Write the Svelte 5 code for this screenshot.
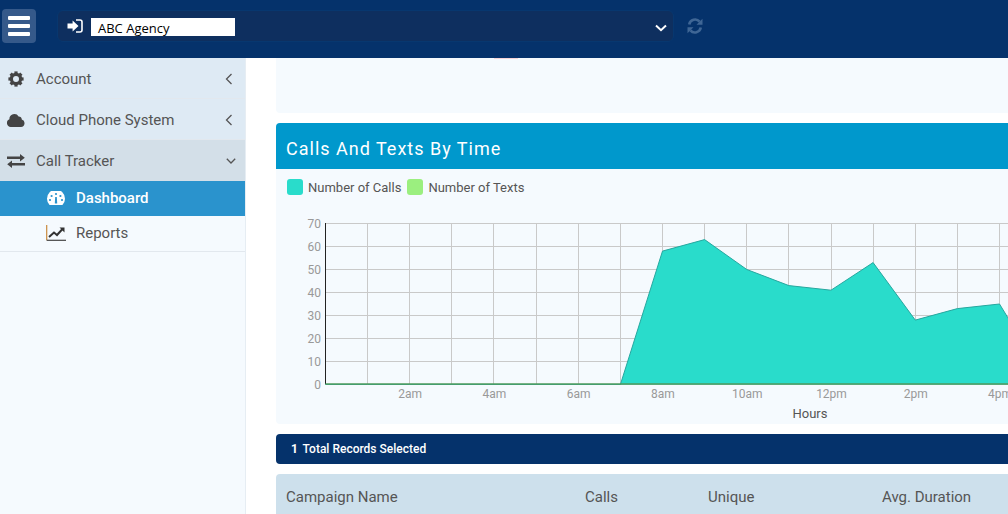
<script lang="ts">
  const calls = [0, 0, 0, 0, 0, 0, 0, 0, 58, 63, 50, 43, 41, 53, 28, 33, 35, 5, 0];
  const x0 = 325.45;
  const y0 = 384.5;
  const stepX = 42.13;
  const stepY = 23;

  const px = (h: number) => x0 + h * stepX;
  const py = (v: number) => y0 - v * stepY / 10;
  // gridlines sit on whole pixels so they stay crisp
  const gx = (h: number) => Math.floor(px(h)) + 0.5;

  const line = calls.map((v, i) => `${px(i).toFixed(1)},${py(v).toFixed(1)}`).join(' ');
  const area = `${x0},${y0} ${line} ${px(calls.length - 1)},${y0}`;
  const hours = Array.from({ length: 19 }, (_, i) => i);
  const values = [0, 10, 20, 30, 40, 50, 60, 70];
  const hourLabels = ['2am', '4am', '6am', '8am', '10am', '12pm', '2pm', '4pm'];
</script>

<div class="page">
  <header class="topbar">
    <button class="burger" aria-label="menu">
      <span></span><span></span><span></span>
    </button>
    <div class="agency">
      <svg class="signin" viewBox="0 0 16 14" width="16" height="14">
        <path d="M0.5 4.4 H5.6 V1.6 L11.5 7 L5.6 12.4 V9.6 H0.5 Z" fill="#fff" />
        <path d="M9 1 H13 Q15 1 15 3 V11 Q15 13 13 13 H9" fill="none" stroke="#fff" stroke-width="1.6" />
      </svg>
      <div class="agency-name">ABC Agency</div>
      <svg class="chevron" viewBox="0 0 12 8" width="12" height="8">
        <path d="M1 1.5 L6 6.2 L11 1.5" fill="none" stroke="#fff" stroke-width="2" />
      </svg>
    </div>
    <svg class="refresh" viewBox="0 0 16 16" width="16" height="16">
      <path d="M2.2 6.4 A6 6 0 0 1 12.6 3.6" fill="none" stroke="#3f6695" stroke-width="2.6" />
      <path d="M15.5 0.8 V6.8 H9.5 Z" fill="#3f6695" />
      <path d="M13.8 9.6 A6 6 0 0 1 3.4 12.4" fill="none" stroke="#3f6695" stroke-width="2.6" />
      <path d="M0.5 15.2 V9.2 H6.5 Z" fill="#3f6695" />
    </svg>
  </header>

  <div class="body">
    <nav class="sidebar">
      <a class="item">
        <svg class="icon" viewBox="0 0 16 16" width="16" height="16">
          <circle cx="8" cy="8" r="4.6" fill="none" stroke="#444" stroke-width="3.2" />
          {#each [0, 45, 90, 135, 180, 225, 270, 315] as a}
            <rect x="6.4" y="0.4" width="3.2" height="3" fill="#444" transform="rotate({a} 8 8)" />
          {/each}
        </svg>
        <span>Account</span>
        <svg class="caret" viewBox="0 0 8 12" width="8" height="12"><path d="M6.5 1 L1.5 6 L6.5 11" fill="none" stroke="#555" stroke-width="1.3" /></svg>
      </a>
      <a class="item">
        <svg class="icon cloud" viewBox="0 0 18 14" width="18" height="14">
          <path d="M4 14 A4 4 0 0 1 2.4 6.3 A5 5 0 0 1 11.6 3.4 A3.2 3.2 0 0 1 14.8 6.4 A3.9 3.9 0 0 1 14 14 Z" fill="#444" />
        </svg>
        <span>Cloud Phone System</span>
        <svg class="caret" viewBox="0 0 8 12" width="8" height="12"><path d="M6.5 1 L1.5 6 L6.5 11" fill="none" stroke="#555" stroke-width="1.3" /></svg>
      </a>
      <a class="item open">
        <svg class="icon" viewBox="0 0 18 14" width="18" height="14">
          <path d="M0 2.6 H13 V0 L17.8 3.8 L13 7.6 V5 H0 Z" fill="#444" />
          <path d="M18 11.4 H5 V14 L0.2 10.2 L5 6.4 V9 H18 Z" fill="#444" />
        </svg>
        <span>Call Tracker</span>
        <svg class="caret down" viewBox="0 0 10 6" width="10" height="6"><path d="M0.8 0.8 L5 5 L9.2 0.8" fill="none" stroke="#555" stroke-width="1.3" /></svg>
      </a>
      <a class="sub active">
        <svg viewBox="0 0 18 14" width="18" height="14">
          <path d="M2.6 14 A9 9 0 1 1 15.4 14 Z" fill="#fff" />
          <circle cx="9" cy="3" r="1.1" fill="#2a93cd" />
          <circle cx="4.6" cy="5" r="1.1" fill="#2a93cd" />
          <circle cx="13.4" cy="5" r="1.1" fill="#2a93cd" />
          <circle cx="3" cy="9" r="1.1" fill="#2a93cd" />
          <circle cx="15" cy="9" r="1.1" fill="#2a93cd" />
          <path d="M8.2 6 H9.8 L10.2 12.5 H7.8 Z" fill="#2a93cd" />
        </svg>
        <span>Dashboard</span>
      </a>
      <a class="sub">
        <svg viewBox="0 0 20 16" width="20" height="16">
          <path d="M0.7 0 V15.3" stroke="#c98a3d" stroke-width="1.2" fill="none" />
          <path d="M0.7 15.3 H20" stroke="#444" stroke-width="1.2" fill="none" />
          <path d="M3 12 L8 7.5 L11 10 L16.5 4" stroke="#333" stroke-width="2" fill="none" />
          <path d="M13.5 2.5 H18.5 V7.5 Z" fill="#333" />
        </svg>
        <span>Reports</span>
      </a>
    </nav>

    <main class="content">
      <div class="card stub"><div class="smudge"></div></div>

      <section class="card chart">
        <h2>Calls And Texts By Time</h2>
        <div class="legend">
          <i class="swatch calls"></i><span>Number of Calls</span>
          <i class="swatch texts"></i><span>Number of Texts</span>
        </div>
        <svg class="plot" viewBox="276 205 800 219" width="800" height="219">
          {#each hours as h}
            <line x1={gx(h)} x2={gx(h)} y1="223.5" y2={y0} stroke="#c9c9c9" />
          {/each}
          {#each values as v}
            <line x1={x0} x2={px(18)} y1={py(v)} y2={py(v)} stroke="#c9c9c9" />
            <text class="tick" x="321" y={py(v) + 4.5} text-anchor="end">{v}</text>
          {/each}
          <polygon points={area} fill="#29dccb" />
          <polyline points={line} fill="none" stroke="#27a79f" stroke-width="1" />
          <line x1="325.5" x2="325.5" y1="223" y2="384" stroke="#222" />
          <line x1={x0} x2={px(18)} y1="384" y2="384" stroke="#4f9a5c" stroke-width="1.5" />
          {#each hourLabels as label, i}
            <text class="tick" x={px((i + 1) * 2) + 0.5} y="398" text-anchor="middle">{label}</text>
          {/each}
          <text class="axis-title" x="810" y="418" text-anchor="middle">Hours</text>
        </svg>
      </section>

      <div class="total"><b>1</b> Total Records Selected</div>

      <div class="thead">
        <span>Campaign Name</span>
        <span>Calls</span>
        <span>Unique</span>
        <span>Avg. Duration</span>
      </div>
    </main>
  </div>
</div>

<style>
  :global(body) { margin: 0; background: #fff; }
  .page { width: 1008px; height: 514px; overflow: hidden; font-family: Roboto, sans-serif; color: #555; }

  .topbar { height: 58px; box-sizing: border-box; background: #05326b; display: flex; align-items: center; padding: 0 0 6px 2px; }
  .burger { width: 34px; height: 34px; border: 0; border-radius: 4px; background: #35598a; display: flex; flex-direction: column; justify-content: center; gap: 4px; padding: 0 6px; }
  .burger span { display: block; height: 4px; background: #fff; border-radius: 1px; }
  .agency { width: 617px; height: 32px; box-sizing: border-box; margin-left: 21px; background: #0e2f5f; border: 1px solid #07376f; border-radius: 6px; display: flex; align-items: center; padding: 0 6px 0 9px; }
  .signin { flex: none; margin-bottom: 1px; }
  .agency-name { width: 137px; height: 18px; margin-left: 8px; padding-left: 7px; background: #fff; color: #000; font: 13px/20px "Open Sans", sans-serif; margin-top: 2px; }
  .chevron { margin-left: auto; margin-top: 3px; }
  .refresh { margin-left: 13px; }

  .body { display: flex; height: 456px; }
  .sidebar { width: 246px; flex: none; box-sizing: border-box; background: #f5fafe; border-right: 1px solid #e6edf3; }
  .item { display: flex; align-items: center; height: 41px; box-sizing: border-box; padding: 2px 12px 0 7px; background: #deeaf4; border-bottom: 1px solid #e2e8ee; font-size: 15px; }
  .item .icon { flex: none; width: 18px; margin-right: 11px; }
  .item .caret { margin-left: auto; }
  .item .caret.down { margin-right: -3px; }
  .item.open { background: #d3dfe8; padding-top: 0; border-bottom: 0; }
  .sub { display: flex; align-items: center; height: 35px; box-sizing: border-box; padding: 0 0 2px 46px; gap: 10px; font-size: 15px; }
  .sub svg { width: 20px; flex: none; }
  .sub.active { background: #2a93cd; color: #fff; font-weight: 500; }
  .sub:last-child { border-bottom: 1px solid #e2e8ee; height: 36px; }

  .content { padding-left: 30px; flex: 1; min-width: 0; }
  .card { width: 800px; background: #f5fafe; border-radius: 4px; }
  .stub { height: 55px; position: relative; border-radius: 0 0 4px 4px; margin-bottom: 10px; }
  .smudge { position: absolute; left: 218px; top: 0; width: 24px; height: 1px; background: #f6d3d6; }
  .chart { height: 301px; overflow: hidden; margin-bottom: 10px; }
  .chart h2 { margin: 0; height: 46px; box-sizing: border-box; padding: 0 10px; background: #0098cc; color: #fff; font-size: 18px; font-weight: 400; letter-spacing: 1px; line-height: 51px; }
  .legend { display: flex; align-items: center; height: 36px; padding: 0 11px 0; font-size: 13px; }
  .swatch { width: 16px; height: 16px; border-radius: 3px; margin-right: 5px; }
  .legend span { margin-right: 6px; }
  .swatch.calls { background: #29dccb; }
  .swatch.texts { background: #9bef7f; }
  .plot { display: block; }
  .tick { font: 12px Roboto, sans-serif; fill: #999; }
  .axis-title { font: 13px Roboto, sans-serif; fill: #555; }

  .total { width: 800px; height: 30px; background: #05326b; color: #fff; border-radius: 4px; padding-left: 15px; box-sizing: border-box; font-size: 12px; font-weight: 500; line-height: 30px; margin-bottom: 10px; }
  .total b { margin-right: 2px; font-weight: 700; }
  .thead { width: 800px; height: 60px; box-sizing: border-box; background: #cde0ec; border-radius: 4px 4px 0 0; padding: 14px 0 0 10px; display: grid; grid-template-columns: 299px 123px 174px 1fr; font-size: 15px; }
</style>
